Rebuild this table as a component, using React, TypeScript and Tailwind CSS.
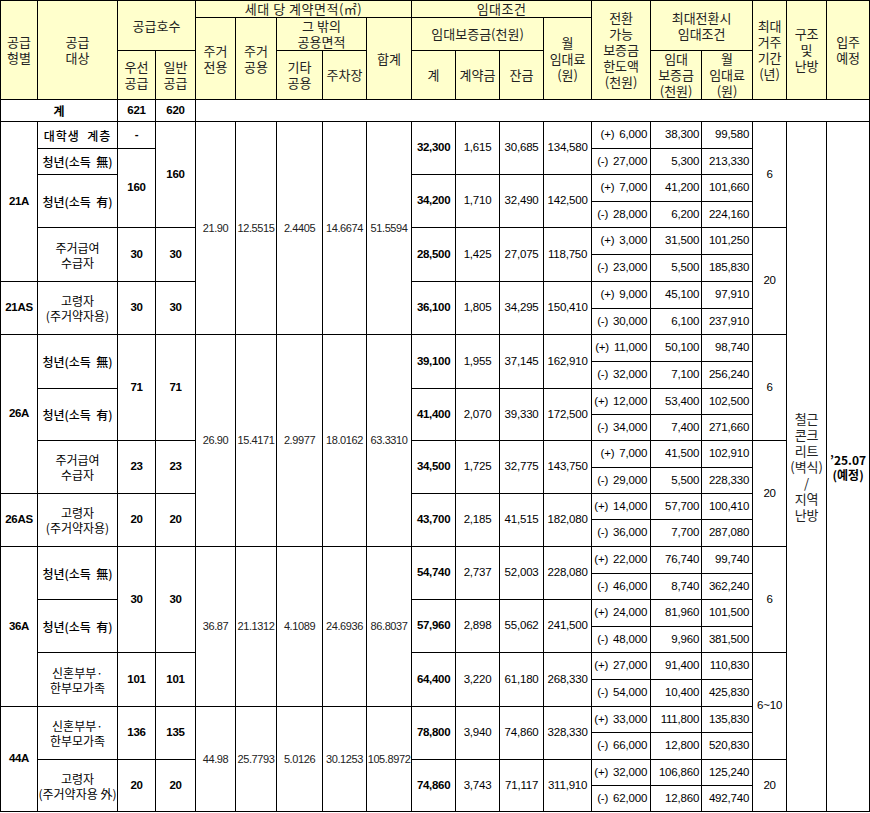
import React from 'react';

const td = 'border border-black p-0 text-center align-middle';
const th = "border border-black p-0 text-center align-middle bg-[#ffffcc] font-normal font-['Noto_Sans_CJK_KR',sans-serif] text-[13px] leading-[16px] text-[#222]";
const kr = "font-['Noto_Sans_CJK_KR',sans-serif] text-[12px] leading-[15px]";
const krb = `${kr} font-bold`;
const krm = `${kr} font-medium`;
const num = 'text-[11.5px] tracking-[-0.2px]';
const numb = 'text-[11.5px] tracking-[-0.3px] font-bold';
const area = 'text-[11px] tracking-[-0.4px] text-[#222]';

const widths = [
  'w-[37px]', 'w-[80px]', 'w-[38px]', 'w-[40px]', 'w-[40px]', 'w-[41px]', 'w-[46px]', 'w-[44px]', 'w-[45px]', 'w-[44px]',
  'w-[44px]', 'w-[44px]', 'w-[48px]', 'w-[59px]', 'w-[51px]', 'w-[51px]', 'w-[34px]', 'w-[40px]', 'w-[43px]',
];

const heights: Record<number, string> = { 26: 'h-[26px]', 27: 'h-[27px]', 28: 'h-[28px]' };
const rowH = [27, 26, 27, 26, 27, 27, 27, 26, 27, 27, 26, 26, 27, 26, 26, 27, 27, 26, 27, 26, 27, 27, 26, 27, 26, 26];

function Rent({ k, d, c, m }: { k: string; d: string; c: string; m: string }) {
  return (
    <>
      <td rowSpan={2} className={`${td} ${numb}`}>{k}</td>
      <td rowSpan={2} className={`${td} ${num}`}>{d}</td>
      <td rowSpan={2} className={`${td} ${num}`}>{c}</td>
      <td rowSpan={2} className={`${td} ${num}`}>{m}</td>
    </>
  );
}

function Conv({ s, v, a, b }: { s: string; v: string; a: string; b: string }) {
  return (
    <>
      <td className={`${td} ${num}`}>
        <div className="flex justify-end gap-[5px] pr-[3px]">
          <span>{s}</span>
          <span>{v}</span>
        </div>
      </td>
      <td className={`${td} ${num} text-right pr-[2px]`}>{a}</td>
      <td className={`${td} ${num} text-right pr-[3px]`}>{b}</td>
    </>
  );
}

function Area({ vals, rs }: { vals: string[]; rs: number }) {
  return (
    <>
      {vals.map((v) => (
        <td key={v} rowSpan={rs} className={`${td} ${area}`}>{v}</td>
      ))}
    </>
  );
}

function Lines({ items }: { items: string[] }) {
  return (
    <>
      {items.map((t, i) => (
        <React.Fragment key={i}>
          {i > 0 && <br />}
          {t}
        </React.Fragment>
      ))}
    </>
  );
}

export default function App() {
  const r = (i: number) => heights[rowH[i]];
  return (
    <div className="w-[870px] bg-white font-['Liberation_Sans','Noto_Sans_CJK_KR',sans-serif] text-black">
      <table className="w-[869px] table-fixed border-collapse">
        <colgroup>
          {widths.map((w, i) => (
            <col key={i} className={w} />
          ))}
        </colgroup>
        <thead>
          <tr className="h-[17px]">
            <th rowSpan={3} className={th}><Lines items={['공급', '형별']} /></th>
            <th rowSpan={3} className={th}><Lines items={['공급', '대상']} /></th>
            <th rowSpan={2} colSpan={2} className={th}>공급호수</th>
            <th colSpan={5} className={`${th} tracking-[0.5px]`}>세대 당 계약면적(㎡)</th>
            <th colSpan={4} className={`${th} tracking-[0.5px]`}>임대조건</th>
            <th rowSpan={3} className={th}><Lines items={['전환', '가능', '보증금', '한도액', '(천원)']} /></th>
            <th rowSpan={2} colSpan={2} className={th}><Lines items={['최대전환시', '임대조건']} /></th>
            <th rowSpan={3} className={th}><Lines items={['최대', '거주', '기간', '(년)']} /></th>
            <th rowSpan={3} className={th}><Lines items={['구조', '및', '난방']} /></th>
            <th rowSpan={3} className={th}><Lines items={['입주', '예정']} /></th>
          </tr>
          <tr className="h-[33px]">
            <th rowSpan={2} className={th}><Lines items={['주거', '전용']} /></th>
            <th rowSpan={2} className={th}><Lines items={['주거', '공용']} /></th>
            <th colSpan={2} className={th}><Lines items={['그 밖의', '공용면적']} /></th>
            <th rowSpan={2} className={th}>합계</th>
            <th colSpan={3} className={th}>임대보증금(천원)</th>
            <th rowSpan={2} className={th}><Lines items={['월', '임대료', '(원)']} /></th>
          </tr>
          <tr className="h-[48px]">
            <th className={th}><Lines items={['우선', '공급']} /></th>
            <th className={th}><Lines items={['일반', '공급']} /></th>
            <th className={th}><Lines items={['기타', '공용']} /></th>
            <th className={th}>주차장</th>
            <th className={th}>계</th>
            <th className={th}>계약금</th>
            <th className={th}>잔금</th>
            <th className={th}><Lines items={['임대', '보증금', '(천원)']} /></th>
            <th className={th}><Lines items={['월', '임대료', '(원)']} /></th>
          </tr>
        </thead>
        <tbody>
          <tr className="h-[22px]">
            <td colSpan={2} className={`${td} ${krb}`}>계</td>
            <td className={`${td} ${numb}`}>621</td>
            <td className={`${td} ${numb}`}>620</td>
            <td colSpan={15} className={td}></td>
          </tr>

          {/* 21A / 21AS */}
          <tr className={r(0)}>
            <td rowSpan={6} className={`${td} ${numb}`}>21A</td>
            <td className={`${td} ${krm} whitespace-pre tracking-[1px]`}>대학생  계층</td>
            <td className={`${td} ${numb}`}>-</td>
            <td rowSpan={4} className={`${td} ${numb}`}>160</td>
            <Area rs={8} vals={['21.90', '12.5515', '2.4405', '14.6674', '51.5594']} />
            <Rent k="32,300" d="1,615" c="30,685" m="134,580" />
            <Conv s="(+)" v="6,000" a="38,300" b="99,580" />
            <td rowSpan={4} className={`${td} ${num}`}>6</td>
            <td rowSpan={26} className={`${td} font-['Noto_Sans_CJK_KR',sans-serif] text-[13px] leading-[16px] text-[#222]`}>
              <Lines items={['철근', '콘크', '리트', '(벽식)', '/', '지역', '난방']} />
            </td>
            <td rowSpan={26} className={`${td} ${krb}`}>
              <Lines items={['’25.07', '(예정)']} />
            </td>
          </tr>
          <tr className={r(1)}>
            <td className={`${td} ${krm} whitespace-pre`}>청년(소득  無)</td>
            <td rowSpan={3} className={`${td} ${numb}`}>160</td>
            <Conv s="(-)" v="27,000" a="5,300" b="213,330" />
          </tr>
          <tr className={r(2)}>
            <td rowSpan={2} className={`${td} ${krm} whitespace-pre`}>청년(소득  有)</td>
            <Rent k="34,200" d="1,710" c="32,490" m="142,500" />
            <Conv s="(+)" v="7,000" a="41,200" b="101,660" />
          </tr>
          <tr className={r(3)}>
            <Conv s="(-)" v="28,000" a="6,200" b="224,160" />
          </tr>
          <tr className={r(4)}>
            <td rowSpan={2} className={`${td} ${kr}`}><Lines items={['주거급여', '수급자']} /></td>
            <td rowSpan={2} className={`${td} ${numb}`}>30</td>
            <td rowSpan={2} className={`${td} ${numb}`}>30</td>
            <Rent k="28,500" d="1,425" c="27,075" m="118,750" />
            <Conv s="(+)" v="3,000" a="31,500" b="101,250" />
            <td rowSpan={4} className={`${td} ${num}`}>20</td>
          </tr>
          <tr className={r(5)}>
            <Conv s="(-)" v="23,000" a="5,500" b="185,830" />
          </tr>
          <tr className={r(6)}>
            <td rowSpan={2} className={`${td} ${numb}`}>21AS</td>
            <td rowSpan={2} className={`${td} ${kr}`}><Lines items={['고령자', '(주거약자용)']} /></td>
            <td rowSpan={2} className={`${td} ${numb}`}>30</td>
            <td rowSpan={2} className={`${td} ${numb}`}>30</td>
            <Rent k="36,100" d="1,805" c="34,295" m="150,410" />
            <Conv s="(+)" v="9,000" a="45,100" b="97,910" />
          </tr>
          <tr className={r(7)}>
            <Conv s="(-)" v="30,000" a="6,100" b="237,910" />
          </tr>

          {/* 26A / 26AS */}
          <tr className={r(8)}>
            <td rowSpan={6} className={`${td} ${numb}`}>26A</td>
            <td rowSpan={2} className={`${td} ${krm} whitespace-pre`}>청년(소득  無)</td>
            <td rowSpan={4} className={`${td} ${numb}`}>71</td>
            <td rowSpan={4} className={`${td} ${numb}`}>71</td>
            <Area rs={8} vals={['26.90', '15.4171', '2.9977', '18.0162', '63.3310']} />
            <Rent k="39,100" d="1,955" c="37,145" m="162,910" />
            <Conv s="(+)" v="11,000" a="50,100" b="98,740" />
            <td rowSpan={4} className={`${td} ${num}`}>6</td>
          </tr>
          <tr className={r(9)}>
            <Conv s="(-)" v="32,000" a="7,100" b="256,240" />
          </tr>
          <tr className={r(10)}>
            <td rowSpan={2} className={`${td} ${krm} whitespace-pre`}>청년(소득  有)</td>
            <Rent k="41,400" d="2,070" c="39,330" m="172,500" />
            <Conv s="(+)" v="12,000" a="53,400" b="102,500" />
          </tr>
          <tr className={r(11)}>
            <Conv s="(-)" v="34,000" a="7,400" b="271,660" />
          </tr>
          <tr className={r(12)}>
            <td rowSpan={2} className={`${td} ${kr}`}><Lines items={['주거급여', '수급자']} /></td>
            <td rowSpan={2} className={`${td} ${numb}`}>23</td>
            <td rowSpan={2} className={`${td} ${numb}`}>23</td>
            <Rent k="34,500" d="1,725" c="32,775" m="143,750" />
            <Conv s="(+)" v="7,000" a="41,500" b="102,910" />
            <td rowSpan={4} className={`${td} ${num}`}>20</td>
          </tr>
          <tr className={r(13)}>
            <Conv s="(-)" v="29,000" a="5,500" b="228,330" />
          </tr>
          <tr className={r(14)}>
            <td rowSpan={2} className={`${td} ${numb}`}>26AS</td>
            <td rowSpan={2} className={`${td} ${kr}`}><Lines items={['고령자', '(주거약자용)']} /></td>
            <td rowSpan={2} className={`${td} ${numb}`}>20</td>
            <td rowSpan={2} className={`${td} ${numb}`}>20</td>
            <Rent k="43,700" d="2,185" c="41,515" m="182,080" />
            <Conv s="(+)" v="14,000" a="57,700" b="100,410" />
          </tr>
          <tr className={r(15)}>
            <Conv s="(-)" v="36,000" a="7,700" b="287,080" />
          </tr>

          {/* 36A */}
          <tr className={r(16)}>
            <td rowSpan={6} className={`${td} ${numb}`}>36A</td>
            <td rowSpan={2} className={`${td} ${krm} whitespace-pre`}>청년(소득  無)</td>
            <td rowSpan={4} className={`${td} ${numb}`}>30</td>
            <td rowSpan={4} className={`${td} ${numb}`}>30</td>
            <Area rs={6} vals={['36.87', '21.1312', '4.1089', '24.6936', '86.8037']} />
            <Rent k="54,740" d="2,737" c="52,003" m="228,080" />
            <Conv s="(+)" v="22,000" a="76,740" b="99,740" />
            <td rowSpan={4} className={`${td} ${num}`}>6</td>
          </tr>
          <tr className={r(17)}>
            <Conv s="(-)" v="46,000" a="8,740" b="362,240" />
          </tr>
          <tr className={r(18)}>
            <td rowSpan={2} className={`${td} ${krm} whitespace-pre`}>청년(소득  有)</td>
            <Rent k="57,960" d="2,898" c="55,062" m="241,500" />
            <Conv s="(+)" v="24,000" a="81,960" b="101,500" />
          </tr>
          <tr className={r(19)}>
            <Conv s="(-)" v="48,000" a="9,960" b="381,500" />
          </tr>
          <tr className={r(20)}>
            <td rowSpan={2} className={`${td} ${kr}`}><Lines items={['신혼부부·', '한부모가족']} /></td>
            <td rowSpan={2} className={`${td} ${numb}`}>101</td>
            <td rowSpan={2} className={`${td} ${numb}`}>101</td>
            <Rent k="64,400" d="3,220" c="61,180" m="268,330" />
            <Conv s="(+)" v="27,000" a="91,400" b="110,830" />
            <td rowSpan={4} className={`${td} ${num}`}>6~10</td>
          </tr>
          <tr className={r(21)}>
            <Conv s="(-)" v="54,000" a="10,400" b="425,830" />
          </tr>

          {/* 44A */}
          <tr className={r(22)}>
            <td rowSpan={4} className={`${td} ${numb}`}>44A</td>
            <td rowSpan={2} className={`${td} ${kr}`}><Lines items={['신혼부부·', '한부모가족']} /></td>
            <td rowSpan={2} className={`${td} ${numb}`}>136</td>
            <td rowSpan={2} className={`${td} ${numb}`}>135</td>
            <Area rs={4} vals={['44.98', '25.7793', '5.0126', '30.1253', '105.8972']} />
            <Rent k="78,800" d="3,940" c="74,860" m="328,330" />
            <Conv s="(+)" v="33,000" a="111,800" b="135,830" />
          </tr>
          <tr className={r(23)}>
            <Conv s="(-)" v="66,000" a="12,800" b="520,830" />
          </tr>
          <tr className={r(24)}>
            <td rowSpan={2} className={`${td} ${kr}`}>
              <Lines items={['고령자', '(주거약자용 外)']} />
            </td>
            <td rowSpan={2} className={`${td} ${numb}`}>20</td>
            <td rowSpan={2} className={`${td} ${numb}`}>20</td>
            <Rent k="74,860" d="3,743" c="71,117" m="311,910" />
            <Conv s="(+)" v="32,000" a="106,860" b="125,240" />
            <td rowSpan={2} className={`${td} ${num}`}>20</td>
          </tr>
          <tr className={r(25)}>
            <Conv s="(-)" v="62,000" a="12,860" b="492,740" />
          </tr>
        </tbody>
      </table>
    </div>
  );
}
